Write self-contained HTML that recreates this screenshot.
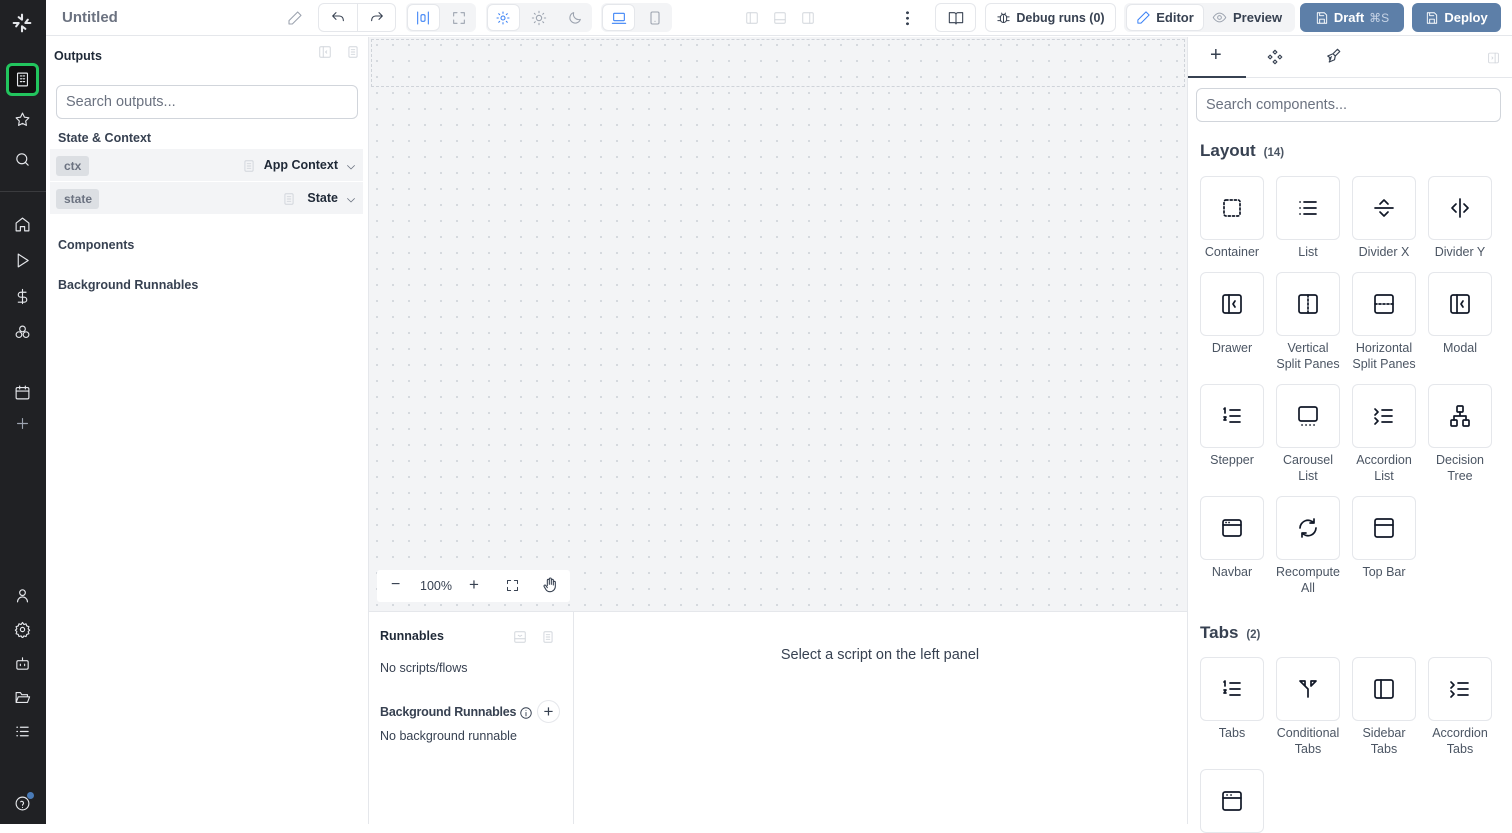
<!DOCTYPE html><html><head><style>
*{box-sizing:border-box;margin:0;padding:0}
body{width:1512px;height:824px;overflow:hidden;font-family:"Liberation Sans",sans-serif;color:#2d3748;background:#fff;position:relative;font-size:13px}
.a{position:absolute}
svg{fill:none;stroke:currentColor;stroke-width:1.6;stroke-linecap:round;stroke-linejoin:round}
.sb{left:0;top:0;width:46px;height:824px;background:#202124}
.sb svg{position:absolute;left:14px;width:17px;height:17px;color:#e5e7eb}
.top{left:46px;top:0;width:1466px;height:36px;background:#fff;border-bottom:1px solid #e5e7eb}
.grp{position:absolute;top:3px;height:29px;background:#f3f4f6;border-radius:6px}
.btn{position:absolute;top:3px;height:29px;border:1px solid #e5e7eb;border-radius:6px;background:#fff;display:flex;align-items:center;justify-content:center;font-size:13px;font-weight:bold;color:#374151;gap:5px}
.ic{position:absolute;width:16px;height:16px;color:#9ca3af}
.tile{position:absolute;width:64px;height:64px;border:1px solid #e5e7eb;border-radius:6px;background:#fff}
.tile svg{position:absolute;left:19px;top:19px;width:24px;height:24px;color:#111827;stroke-width:1.7}
.lbl{position:absolute;width:90px;text-align:center;font-size:12.5px;color:#4b5563;line-height:16px}
.canvas{left:369px;top:37px;width:818px;height:574px;background-color:#f3f4f6;background-image:radial-gradient(#cbd0d6 0.8px,transparent 1px);background-size:16px 16px}
.b{font-weight:bold;font-size:12.5px}
</style></head><body>
<div class="a sb">
<svg style="top:13px;width:20px;height:20px;left:12px" viewBox="0 0 24 24"><path d="M12 2v6l-4-3M12 22v-6l4 3M2 12h6l-3 4M22 12h-6l3-4" stroke-width="2.5"/></svg>
<div class="a" style="left:6px;top:63px;width:33px;height:33px;border:3px solid #22c55e;border-radius:6px;background:#111"></div>
<svg style="top:71px" viewBox="0 0 24 24"><rect x="5" y="3" width="14" height="18" rx="1"/><path d="M9 7h2M13 7h2M9 11h2M13 11h2M9 15h2M13 15h2"/></svg>
<svg style="top:111px" viewBox="0 0 24 24"><path d="M12 3l2.8 5.8 6.2.9-4.5 4.4 1 6.2L12 17.4 6.5 20.3l1-6.2L3 9.7l6.2-.9z"/></svg>
<svg style="top:151px" viewBox="0 0 24 24"><circle cx="11" cy="11" r="7"/><path d="M20 20l-4-4"/></svg>
<div class="a" style="left:0;top:191px;width:46px;height:1px;background:#3a3b3e"></div>
<svg style="top:216px" viewBox="0 0 24 24"><path d="M3 10l9-7 9 7v11h-6v-6h-6v6H3z"/></svg>
<svg style="top:252px" viewBox="0 0 24 24"><path d="M6 3l14 9-14 9z"/></svg>
<svg style="top:288px" viewBox="0 0 24 24"><path d="M12 2v20M17 6H9.5a3.5 3.5 0 000 7h5a3.5 3.5 0 010 7H6"/></svg>
<svg style="top:324px" viewBox="0 0 24 24"><circle cx="12" cy="7" r="4"/><circle cx="7" cy="15" r="4"/><circle cx="17" cy="15" r="4"/></svg>
<svg style="top:384px" viewBox="0 0 24 24"><rect x="3" y="5" width="18" height="16" rx="2"/><path d="M3 10h18M8 3v4M16 3v4"/></svg>
<svg style="top:415px;color:#9ca3af" viewBox="0 0 24 24"><path d="M12 5v14M5 12h14"/></svg>
<svg style="top:587px" viewBox="0 0 24 24"><circle cx="12" cy="8" r="4"/><path d="M5 21a7 7 0 0114 0"/></svg>
<svg style="top:621px" viewBox="0 0 24 24"><circle cx="12" cy="12" r="3"/><path d="M12 2l2 3 3-1 1 3 3 1-1 3 2 2-2 2 1 3-3 1-1 3-3-1-2 3-2-3-3 1-1-3-3-1 1-3-2-2 2-2-1-3 3-1 1-3 3 1z"/></svg>
<svg style="top:655px" viewBox="0 0 24 24"><rect x="4" y="8" width="16" height="12" rx="2"/><path d="M12 4v4M9 13v2M15 13v2"/></svg>
<svg style="top:689px" viewBox="0 0 24 24"><path d="M3 19V5h6l2 3h8v3M3 19l3-8h16l-3 8z"/></svg>
<svg style="top:723px" viewBox="0 0 24 24"><path d="M4 6h1M4 12h1M4 18h1M9 6h11M9 12h11M9 18h11"/></svg>
<svg style="top:795px" viewBox="0 0 24 24"><circle cx="12" cy="12" r="9"/><path d="M9.5 9.5a2.5 2.5 0 014 2c0 1.5-1.5 1.5-1.5 3M12 17.5v.1"/></svg>
<div class="a" style="left:27px;top:792px;width:7px;height:7px;border-radius:50%;background:#4a7bb7"></div>
</div>

<div class="a top">
<div class="a" style="left:16px;top:9px;font-size:15px;font-weight:bold;color:#6b7280">Untitled</div>
<svg class="ic" style="left:241px;top:10px" viewBox="0 0 24 24"><path d="M16 3l5 5L8 21H3v-5z"/></svg>
<div class="btn" style="left:272px;width:78px"></div>
<div class="a" style="left:311px;top:4px;width:1px;height:27px;background:#e5e7eb"></div>
<svg class="ic" style="left:284px;top:10px;color:#374151" viewBox="0 0 24 24"><path d="M9 14L4 9l5-5M4 9h10a6 6 0 016 6v1"/></svg>
<svg class="ic" style="left:323px;top:10px;color:#374151" viewBox="0 0 24 24"><path d="M15 14l5-5-5-5M20 9H10a6 6 0 00-6 6v1"/></svg>
<div class="grp" style="left:360px;width:70px"></div>
<div class="btn" style="left:361px;top:4px;height:27px;width:33px"></div>
<svg class="ic" style="left:369px;top:10px;color:#3b82f6" viewBox="0 0 24 24"><path d="M4 3v18M20 3v18"/><rect x="9" y="7" width="6" height="10" rx="2"/></svg>
<svg class="ic" style="left:405px;top:10px" viewBox="0 0 24 24"><path d="M4 9V4h5M15 4h5v5M20 15v5h-5M9 20H4v-5"/></svg>
<div class="grp" style="left:440px;width:106px"></div>
<div class="btn" style="left:441px;top:4px;height:27px;width:33px"></div>
<svg class="ic" style="left:449px;top:10px;color:#3b82f6" viewBox="0 0 24 24"><circle cx="12" cy="12" r="3"/><path d="M12 3v2M12 19v2M3 12h2M19 12h2M5.6 5.6l1.4 1.4M17 17l1.4 1.4M5.6 18.4L7 17M17 7l1.4-1.4"/></svg>
<svg class="ic" style="left:485px;top:10px" viewBox="0 0 24 24"><circle cx="12" cy="12" r="4"/><path d="M12 2v2M12 20v2M2 12h2M20 12h2M5 5l1.4 1.4M17.6 17.6L19 19M5 19l1.4-1.4M17.6 6.4L19 5"/></svg>
<svg class="ic" style="left:521px;top:10px" viewBox="0 0 24 24"><path d="M20 14A8 8 0 0110 4a8 8 0 1010 10z"/></svg>
<div class="grp" style="left:555px;width:71px"></div>
<div class="btn" style="left:556px;top:4px;height:27px;width:33px"></div>
<svg class="ic" style="left:565px;top:10px;color:#3b82f6" viewBox="0 0 24 24"><rect x="4" y="5" width="16" height="11" rx="1"/><path d="M2 20h20"/></svg>
<svg class="ic" style="left:601px;top:10px" viewBox="0 0 24 24"><rect x="6" y="3" width="12" height="18" rx="2"/><path d="M12 17v.1"/></svg>
<svg class="ic" style="left:699px;top:10px;color:#d1d5db;width:14px" viewBox="0 0 24 24"><rect x="3" y="3" width="18" height="18" rx="2"/><path d="M9 3v18"/></svg>
<svg class="ic" style="left:727px;top:10px;color:#d1d5db;width:14px" viewBox="0 0 24 24"><rect x="3" y="3" width="18" height="18" rx="2"/><path d="M3 15h18"/></svg>
<svg class="ic" style="left:755px;top:10px;color:#d1d5db;width:14px" viewBox="0 0 24 24"><rect x="3" y="3" width="18" height="18" rx="2"/><path d="M15 3v18"/></svg>
<div class="a" style="left:860px;top:10px;width:3px;height:16px;background:radial-gradient(circle,#374151 1.3px,transparent 1.6px) 0 0/3px 5.5px"></div>
<div class="btn" style="left:889px;width:41px"><svg style="width:16px;height:16px" viewBox="0 0 24 24"><path d="M2 4h7a3 3 0 013 3v14a2 2 0 00-2-2H2zM22 4h-7a3 3 0 00-3 3v14a2 2 0 012-2h8z"/></svg></div>
<div class="btn" style="left:939px;width:131px;font-size:12.5px"><svg style="width:15px;height:15px" viewBox="0 0 24 24"><rect x="7" y="7" width="10" height="13" rx="5"/><path d="M9 5l1 2M15 5l-1 2M3 11h4M17 11h4M3 17h4M17 17h4M12 9v11"/></svg>Debug runs (0)</div>
<div class="grp" style="left:1078px;width:171px"></div>
<div class="btn" style="left:1080px;top:4px;height:27px;width:78px"><svg style="width:15px;height:15px;color:#3b82f6" viewBox="0 0 24 24"><path d="M16 3l5 5L8 21H3v-5z"/></svg>Editor</div>
<div class="a" style="left:1166px;top:10px;font-size:13px;font-weight:bold;color:#374151;display:flex;gap:6px;align-items:center"><svg style="width:15px;height:15px;color:#9ca3af" viewBox="0 0 24 24"><path d="M2 12s4-7 10-7 10 7 10 7-4 7-10 7S2 12 2 12z"/><circle cx="12" cy="12" r="3"/></svg>Preview</div>
<div class="btn" style="left:1254px;width:104px;background:#5d7fa8;border-color:#5d7fa8;color:#fff"><svg style="width:14px;height:14px" viewBox="0 0 24 24"><path d="M5 3h11l4 4v14H4V3zM8 3v5h7M8 21v-7h8v7"/></svg>Draft <span style="font-weight:normal;color:#c7d4e6;font-size:12px">⌘S</span></div>
<div class="btn" style="left:1366px;width:89px;background:#5d7fa8;border-color:#5d7fa8;color:#fff"><svg style="width:14px;height:14px" viewBox="0 0 24 24"><path d="M5 3h11l4 4v14H4V3zM8 3v5h7M8 21v-7h8v7"/></svg>Deploy</div>
</div>

<!-- left panel -->
<div class="a" style="left:46px;top:37px;width:323px;height:787px;border-right:1px solid #e5e7eb">
<div class="a b" style="left:8px;top:12px;color:#1f2937">Outputs</div>
<svg class="ic" style="left:272px;top:7px;width:14px;color:#d1d5db" viewBox="0 0 24 24"><rect x="3" y="3" width="18" height="18" rx="2"/><path d="M9 3v18M15 10l-2 2 2 2"/></svg>
<svg class="ic" style="left:300px;top:7px;width:14px;color:#d1d5db" viewBox="0 0 24 24"><rect x="5" y="3" width="14" height="18" rx="2"/><path d="M9 8h6M9 12h6M9 16h6"/></svg>
<div class="a" style="left:10px;top:48px;width:302px;height:34px;border:1px solid #d1d5db;border-radius:6px;padding:8px 9px;font-size:14.5px;color:#6b7280">Search outputs...</div>
<div class="a b" style="left:12px;top:94px;color:#374151">State &amp; Context</div>
<div class="a" style="left:4px;top:112px;width:313px;height:32px;background:#f3f4f6"></div>
<div class="a" style="left:10px;top:119px;width:33px;height:20px;background:#dcdfe3;border-radius:3px;font-size:12px;font-weight:bold;color:#6b7280;padding:3px 8px">ctx</div>
<svg class="ic" style="left:196px;top:121px;width:14px;color:#d1d5db" viewBox="0 0 24 24"><rect x="5" y="3" width="14" height="18" rx="2"/><path d="M9 8h6M9 12h6M9 16h6"/></svg>
<div class="a b" style="left:292px;top:121px;color:#1f2937;transform:translateX(-100%);white-space:nowrap">App Context</div>
<svg class="ic" style="left:299px;top:122px;width:12px;color:#6b7280" viewBox="0 0 24 24"><path d="M5 9l7 7 7-7"/></svg>
<div class="a" style="left:4px;top:145px;width:313px;height:32px;background:#f3f4f6"></div>
<div class="a" style="left:10px;top:152px;width:43px;height:20px;background:#dcdfe3;border-radius:3px;font-size:12px;font-weight:bold;color:#6b7280;padding:3px 8px">state</div>
<svg class="ic" style="left:236px;top:154px;width:14px;color:#d1d5db" viewBox="0 0 24 24"><rect x="5" y="3" width="14" height="18" rx="2"/><path d="M9 8h6M9 12h6M9 16h6"/></svg>
<div class="a b" style="left:292px;top:154px;color:#1f2937;transform:translateX(-100%)">State</div>
<svg class="ic" style="left:299px;top:155px;width:12px;color:#6b7280" viewBox="0 0 24 24"><path d="M5 9l7 7 7-7"/></svg>
<div class="a b" style="left:12px;top:201px;color:#374151">Components</div>
<div class="a b" style="left:12px;top:241px;color:#374151">Background Runnables</div>
</div>

<div class="a canvas"></div>
<div class="a" style="left:371px;top:39px;width:814px;height:48px;border:1.5px dashed #cfd3d9"></div>
<div class="a" style="left:377px;top:570px;width:193px;height:32px;background:#fff;border-radius:3px;font-size:12.5px;color:#374151">
<span style="position:absolute;left:14px;top:6px;font-size:16px">−</span><span style="position:absolute;left:43px;top:9px">100%</span><span style="position:absolute;left:92px;top:5px;font-size:17px">+</span>
<svg style="position:absolute;left:128px;top:8px;width:15px;height:15px" viewBox="0 0 24 24"><path d="M4 9V4h5M15 4h5v5M20 15v5h-5M9 20H4v-5"/></svg>
<svg style="position:absolute;left:165px;top:7px;width:16px;height:16px" viewBox="0 0 24 24"><path d="M8 13V5a1.5 1.5 0 013 0v6-8a1.5 1.5 0 013 0v8-6a1.5 1.5 0 013 0v7-4a1.5 1.5 0 013 0v6a8 8 0 01-8 8 7 7 0 01-6-3l-3-5a1.5 1.5 0 012.5-1.5L8 16"/></svg>
</div>
<div class="a" style="left:369px;top:611px;width:818px;height:1px;background:#e5e7eb"></div>
<div class="a" style="left:573px;top:611px;width:1px;height:213px;background:#e5e7eb"></div>
<div class="a b" style="left:380px;top:629px;color:#1f2937">Runnables</div>
<svg class="ic" style="left:513px;top:629px;width:14px;color:#d1d5db" viewBox="0 0 24 24"><rect x="3" y="3" width="18" height="18" rx="2"/><path d="M3 15h18M9 9l3 2 3-2"/></svg>
<svg class="ic" style="left:541px;top:629px;width:14px;color:#d1d5db" viewBox="0 0 24 24"><rect x="5" y="3" width="14" height="18" rx="2"/><path d="M9 8h6M9 12h6M9 16h6"/></svg>
<div class="a" style="left:380px;top:661px;color:#374151;font-size:12.5px">No scripts/flows</div>
<div class="a b" style="left:380px;top:705px;color:#374151;letter-spacing:-0.2px">Background Runnables</div>
<svg class="ic" style="left:519px;top:705px;width:14px;color:#374151" viewBox="0 0 24 24"><circle cx="12" cy="12" r="9"/><path d="M12 11v6M12 7.5v.1"/></svg>
<div class="a" style="left:537px;top:700px;width:23px;height:23px;border:1px solid #e5e7eb;border-radius:50%;text-align:center;font-size:17px;line-height:21px;color:#374151">+</div>
<div class="a" style="left:380px;top:729px;color:#374151;font-size:12.5px">No background runnable</div>
<div class="a" style="left:574px;top:647px;width:612px;text-align:center;font-size:14.5px;color:#374151">Select a script on the left panel</div>

<!-- right panel -->
<div class="a" style="left:1187px;top:37px;width:325px;height:787px;border-left:1px solid #e5e7eb">
<div class="a" style="left:0;top:40px;width:325px;height:1px;background:#e5e7eb"></div>
<div class="a" style="left:0;top:39px;width:58px;height:2px;background:#374151"></div>
<div class="a" style="left:22px;top:7px;font-size:20px;color:#374151">+</div>
<svg class="ic" style="left:78px;top:11px;color:#374151;width:18px;height:18px" viewBox="0 0 24 24"><path d="M12 3l2.5 2.5L12 8 9.5 5.5zM5.5 9.5L8 12l-2.5 2.5L3 12zM18.5 9.5L21 12l-2.5 2.5L16 12zM12 16l2.5 2.5L12 21l-2.5-2.5z"/></svg>
<svg class="ic" style="left:136px;top:10px;color:#374151;width:18px;height:18px" viewBox="0 0 24 24"><path d="M18 3l3 3-6 6-3-3zM12 9l-7 3 4 3-2 5 7-3 1-5M10 13l-3 3"/></svg>
<svg class="ic" style="left:299px;top:13px;width:13px;color:#d1d5db" viewBox="0 0 24 24"><rect x="3" y="3" width="18" height="18" rx="2"/><path d="M15 3v18M9 10l2 2-2 2"/></svg>
<div class="a" style="left:8px;top:51px;width:305px;height:34px;border:1px solid #d1d5db;border-radius:6px;padding:8px 9px;font-size:14.5px;color:#6b7280">Search components...</div>
<div class="a" style="left:12px;top:104px;font-size:17px;font-weight:bold;color:#374151">Layout <span style="font-size:11.5px;color:#4b5563">&nbsp;(14)</span></div>
<div class="a" style="left:12px;top:586px;font-size:17px;font-weight:bold;color:#374151">Tabs <span style="font-size:11.5px;color:#4b5563">&nbsp;(2)</span></div>
</div>

<div class="tile" style="left:1200px;top:176px"><svg viewBox="0 0 24 24" stroke-dasharray="2 2.2"><rect x="4" y="4" width="16" height="16" rx="2"/></svg></div>
<div class="tile" style="left:1276px;top:176px"><svg viewBox="0 0 24 24"><path d="M4 6h.1M4 12h.1M4 18h.1M8 6h12M8 12h12M8 18h12"/></svg></div>
<div class="tile" style="left:1352px;top:176px"><svg viewBox="0 0 24 24"><path d="M3 12h18M8 8l4-4 4 4M8 16l4 4 4-4"/></svg></div>
<div class="tile" style="left:1428px;top:176px"><svg viewBox="0 0 24 24"><path d="M12 3v18M8 8l-4 4 4 4M16 8l4 4-4 4"/></svg></div>
<div class="lbl" style="left:1187px;top:244px">Container</div><div class="lbl" style="left:1263px;top:244px">List</div><div class="lbl" style="left:1339px;top:244px">Divider X</div><div class="lbl" style="left:1415px;top:244px">Divider Y</div>

<div class="tile" style="left:1200px;top:272px"><svg viewBox="0 0 24 24"><rect x="3" y="3" width="18" height="18" rx="2"/><path d="M9 3v18M15 9l-2 3 2 3"/></svg></div>
<div class="tile" style="left:1276px;top:272px"><svg viewBox="0 0 24 24"><rect x="3" y="3" width="18" height="18" rx="2"/><path d="M12 3v18" stroke-dasharray="2 2"/></svg></div>
<div class="tile" style="left:1352px;top:272px"><svg viewBox="0 0 24 24"><rect x="3" y="3" width="18" height="18" rx="2"/><path d="M3 12h18" stroke-dasharray="2 2"/></svg></div>
<div class="tile" style="left:1428px;top:272px"><svg viewBox="0 0 24 24"><rect x="3" y="3" width="18" height="18" rx="2"/><path d="M9 3v18M15 9l-2 3 2 3"/></svg></div>
<div class="lbl" style="left:1187px;top:340px">Drawer</div><div class="lbl" style="left:1263px;top:340px">Vertical<br>Split Panes</div><div class="lbl" style="left:1339px;top:340px">Horizontal<br>Split Panes</div><div class="lbl" style="left:1415px;top:340px">Modal</div>

<div class="tile" style="left:1200px;top:384px"><svg viewBox="0 0 24 24"><path d="M4 5l1-1v5M4 13h2l-2 3h2M10 6h10M10 12h10M10 18h10"/></svg></div>
<div class="tile" style="left:1276px;top:384px"><svg viewBox="0 0 24 24"><rect x="3" y="3" width="18" height="14" rx="2"/><path d="M6 21h.1M10 21h.1M14 21h.1M18 21h.1"/></svg></div>
<div class="tile" style="left:1352px;top:384px"><svg viewBox="0 0 24 24"><path d="M3 5l3 3-3 3M3 14l3 3-3 3M10 6h10M10 12h10M10 18h10"/></svg></div>
<div class="tile" style="left:1428px;top:384px"><svg viewBox="0 0 24 24"><rect x="9" y="2" width="6" height="6" rx="1"/><rect x="3" y="16" width="6" height="6" rx="1"/><rect x="15" y="16" width="6" height="6" rx="1"/><path d="M12 8v4M6 16v-4h12v4"/></svg></div>
<div class="lbl" style="left:1187px;top:452px">Stepper</div><div class="lbl" style="left:1263px;top:452px">Carousel<br>List</div><div class="lbl" style="left:1339px;top:452px">Accordion<br>List</div><div class="lbl" style="left:1415px;top:452px">Decision<br>Tree</div>

<div class="tile" style="left:1200px;top:496px"><svg viewBox="0 0 24 24"><rect x="3" y="4" width="18" height="16" rx="2"/><path d="M3 9h18M6 6.5h.1M9 6.5h.1"/></svg></div>
<div class="tile" style="left:1276px;top:496px"><svg viewBox="0 0 24 24"><path d="M20 12a8 8 0 01-14 5M4 12a8 8 0 0114-5M18 3v4h-4M6 21v-4h4"/></svg></div>
<div class="tile" style="left:1352px;top:496px"><svg viewBox="0 0 24 24"><rect x="3" y="3" width="18" height="18" rx="2"/><path d="M3 9h18"/></svg></div>
<div class="lbl" style="left:1187px;top:564px">Navbar</div><div class="lbl" style="left:1263px;top:564px">Recompute<br>All</div><div class="lbl" style="left:1339px;top:564px">Top Bar</div>

<div class="tile" style="left:1200px;top:657px"><svg viewBox="0 0 24 24"><path d="M4 5l1-1v5M4 13h2l-2 3h2M10 6h10M10 12h10M10 18h10"/></svg></div>
<div class="tile" style="left:1276px;top:657px"><svg viewBox="0 0 24 24"><path d="M4 4h5v5M4 4l8 8v8M20 4h-5v5M20 4l-5 5"/></svg></div>
<div class="tile" style="left:1352px;top:657px"><svg viewBox="0 0 24 24"><rect x="3" y="3" width="18" height="18" rx="2"/><path d="M9 3v18"/></svg></div>
<div class="tile" style="left:1428px;top:657px"><svg viewBox="0 0 24 24"><path d="M3 5l3 3-3 3M3 14l3 3-3 3M10 6h10M10 12h10M10 18h10"/></svg></div>
<div class="lbl" style="left:1187px;top:725px">Tabs</div><div class="lbl" style="left:1263px;top:725px">Conditional<br>Tabs</div><div class="lbl" style="left:1339px;top:725px">Sidebar<br>Tabs</div><div class="lbl" style="left:1415px;top:725px">Accordion<br>Tabs</div>
<div class="tile" style="left:1200px;top:769px"><svg viewBox="0 0 24 24"><rect x="3" y="3" width="18" height="18" rx="2"/><path d="M3 9h18M7 6h.1M11 6h.1"/></svg></div>
</body></html>
